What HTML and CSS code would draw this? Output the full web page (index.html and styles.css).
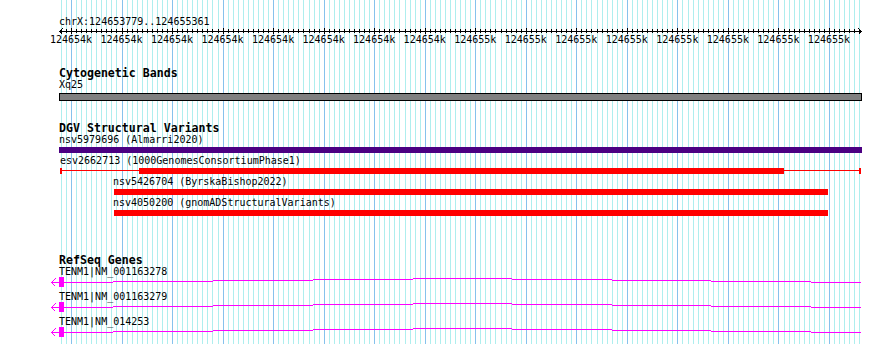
FILE: index.html
```html
<!DOCTYPE html>
<html lang="en">
<head>
<meta charset="utf-8">
<title>chrX:124653779..124655361</title>
<link rel="stylesheet" href="styles.css">
</head>
<body>
<div class="view">
  <svg class="grid" id="grid" width="890" height="344" shape-rendering="crispEdges"></svg>
  <div class="content">
    <div class="chrom">chrX:124653779..124655361</div>
    <svg class="ruler" id="ruler" width="804" height="6" shape-rendering="crispEdges"></svg>
    <div class="ticks">
      <span>124654k</span><span>124654k</span><span>124654k</span><span>124654k</span>
      <span>124654k</span><span>124654k</span><span>124654k</span><span>124654k</span>
      <span>124655k</span><span>124655k</span><span>124655k</span><span>124655k</span>
      <span>124655k</span><span>124655k</span><span>124655k</span><span>124655k</span>
    </div>

    <section class="track cyto">
      <h2 class="track-title">Cytogenetic Bands</h2>
      <div class="label">Xq25</div>
      <div class="band"></div>
    </section>

    <section class="track dgv">
      <h2 class="track-title">DGV Structural Variants</h2>
      <div class="sv">
        <div class="label">nsv5979696 (Almarri2020)</div>
        <div class="bar purple" style="margin-left:0;width:803px"></div>
      </div>
      <div class="sv">
        <div class="label" style="margin-left:1px">esv2662713 (1000GenomesConsortiumPhase1)</div>
        <div class="bar span" style="margin-left:1px;width:801px">
          <div class="thick" style="margin-left:77px;width:645px"></div>
        </div>
      </div>
      <div class="sv">
        <div class="label" style="margin-left:54px">nsv5426704 (ByrskaBishop2022)</div>
        <div class="bar red" style="margin-left:55px;width:714px"></div>
      </div>
      <div class="sv">
        <div class="label" style="margin-left:54px">nsv4050200 (gnomADStructuralVariants)</div>
        <div class="bar red" style="margin-left:55px;width:714px"></div>
      </div>
    </section>

    <section class="track genes">
      <h2 class="track-title">RefSeq Genes</h2>
      <div class="gene">
        <div class="label">TENM1|NM_001163278</div>
        <svg class="gene-glyph" width="812" height="13" shape-rendering="crispEdges">
          <path class="arrow" d="M1 6.5H9M1.5 6.5L5.5 2.5M1.5 6.5L5.5 10.5"/>
          <rect class="exon" x="9" y="1" width="5" height="10"/>
          <path class="intron" d="M14 6.5H63M63 5.5H163M163 4.5H263M263 3.5H363M363 2.5H462M462 3.5H562M562 4.5H661M661 5.5H761M761 6.5H811"/>
        </svg>
      </div>
      <div class="gene">
        <div class="label">TENM1|NM_001163279</div>
        <svg class="gene-glyph" width="812" height="13" shape-rendering="crispEdges">
          <path class="arrow" d="M1 6.5H9M1.5 6.5L5.5 2.5M1.5 6.5L5.5 10.5"/>
          <rect class="exon" x="9" y="1" width="5" height="10"/>
          <path class="intron" d="M14 6.5H63M63 5.5H163M163 4.5H263M263 3.5H363M363 2.5H462M462 3.5H562M562 4.5H661M661 5.5H761M761 6.5H811"/>
        </svg>
      </div>
      <div class="gene">
        <div class="label">TENM1|NM_014253</div>
        <svg class="gene-glyph" width="812" height="13" shape-rendering="crispEdges">
          <path class="arrow" d="M1 6.5H9M1.5 6.5L5.5 2.5M1.5 6.5L5.5 10.5"/>
          <rect class="exon" x="9" y="1" width="5" height="10"/>
          <path class="intron" d="M14 6.5H63M63 5.5H163M163 4.5H263M263 3.5H363M363 2.5H462M462 3.5H562M562 4.5H661M661 5.5H761M761 6.5H811"/>
        </svg>
      </div>
    </section>
  </div>
</div>
<script src="script.js"></script>
</body>
</html>
```

FILE: styles.css
```css
html, body {
  margin: 0;
  background: #ffffff;
}
body {
  font-family: "DejaVu Sans Mono", "Liberation Mono", monospace;
  font-size: 10px;
  color: #000000;
}
.view {
  position: relative;
  width: 890px;
  height: 344px;
  overflow: hidden;
}
.grid {
  position: absolute;
  left: 0;
  top: 0;
}
.grid .minor { stroke: #aeeeee; stroke-width: 1; }
.grid .major { stroke: #86c2ec; stroke-width: 1; }
.content {
  position: relative;
  padding: 16px 0 0 59px;
}
.chrom {
  height: 12px;
  line-height: 12px;
  white-space: nowrap;
}
.ruler {
  display: block;
}
.ruler line, .ruler path {
  stroke: #000000;
  stroke-width: 1;
  fill: none;
}
.ticks {
  display: flex;
  margin-left: -13.3px;
  height: 12px;
  line-height: 12px;
}
.ticks span {
  flex: 0 0 50.533px;
  text-align: center;
  white-space: nowrap;
}
.track-title {
  margin: 0;
  font-size: 11.6px;
  font-weight: bold;
  height: 11px;
  padding-top: 1px;
  line-height: 12px;
  white-space: nowrap;
}
.cyto .track-title { margin: 20px 0 1px; }
.dgv .track-title { margin-top: 20px; }
.genes .track-title { margin-top: 36px; }
.label {
  height: 12px;
  line-height: 12px;
  white-space: nowrap;
}
.band {
  margin-top: 2px;
  width: 803px;
  height: 8px;
  box-sizing: border-box;
  border: 1px solid #000000;
  background: #808080;
}
.sv {
  padding: 1px 0 1px;
}
.bar {
  margin-top: 1px;
  height: 6px;
}
.bar.purple { background: #4b0082; }
.bar.red { background: #ff0000; }
.bar.span {
  display: flex;
  box-sizing: border-box;
  border-left: 2px solid #ff0000;
  border-right: 2px solid #ff0000;
  background: linear-gradient(#ff0000, #ff0000) no-repeat 0 2px / 100% 1px;
}
.bar.span .thick {
  height: 6px;
  background: #ff0000;
}
.gene {
  padding: 1px 0 1px;
}
.gene-glyph {
  display: block;
  margin: -2px 0 0 -9px;
}
.gene-glyph .arrow, .gene-glyph .intron {
  stroke: #ff00ff;
  stroke-width: 1;
  fill: none;
}
.gene-glyph .exon { fill: #ff00ff; }
```

FILE: script.js
```js
(function () {
  var NS = 'http://www.w3.org/2000/svg';
  var grid = document.getElementById('grid');
  var ruler = document.getElementById('ruler');
  function line(parent, x1, y1, x2, y2, cls) {
    var l = document.createElementNS(NS, 'line');
    l.setAttribute('x1', x1); l.setAttribute('y1', y1);
    l.setAttribute('x2', x2); l.setAttribute('y2', y2);
    if (cls) l.setAttribute('class', cls);
    parent.appendChild(l);
  }
  // 10 bp minor grid, 100 bp major grid
  for (var m = -2; m <= 156; m++) {
    var x = Math.round(71 + 5.0533 * m) + 0.5;
    var major = (m % 10 === 0);
    line(grid, x, 0, x, 344, major ? 'major' : 'minor');
    var rx = x - 59;
    line(ruler, rx, major ? 0 : 1, rx, major ? 6 : 5);
  }
  // ruler axis with arrowheads
  line(ruler, 0, 3.5, 803, 3.5);
  var p = document.createElementNS(NS, 'path');
  p.setAttribute('d', 'M0.5 3.5L3.5 0.5M0.5 3.5L3.5 6.5M802.5 3.5L799.5 0.5M802.5 3.5L799.5 6.5');
  ruler.appendChild(p);
})();
```
